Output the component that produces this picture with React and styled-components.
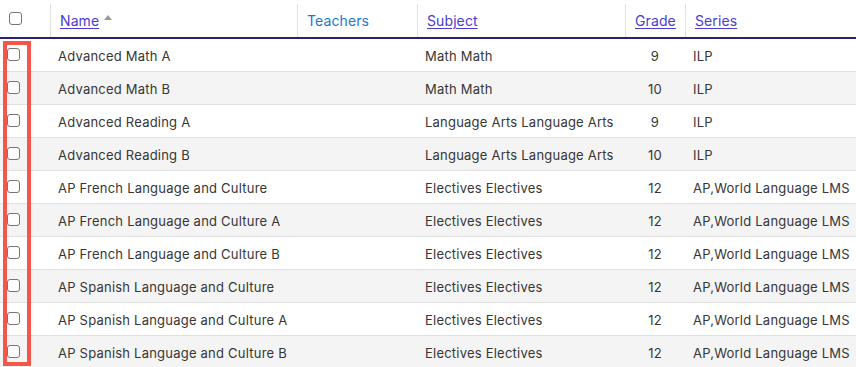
import React from "react";
import styled, { createGlobalStyle } from "styled-components";

const Global = createGlobalStyle`
  html, body { margin: 0; padding: 0; background: #fff; }
  body { font-family: Inter, "Noto Sans", sans-serif; -webkit-font-smoothing: antialiased; }
`;

const COLS = "50px 247px 120px 208px 60px 1fr";

const Table = styled.div`
  position: relative;
  width: 856px;
`;

const HeaderRow = styled.div`
  display: grid;
  grid-template-columns: ${COLS};
  height: 39px;
  padding-top: 4px;
  box-sizing: border-box;
  border-bottom: 2px solid #2c216f;
`;

const HeadCell = styled.div`
  display: flex;
  align-items: center;
  padding-left: 9px;
  border-left: ${(p) => (p.$check ? "none" : "1px solid #e2e2e2")};
  font-size: 14px;
  padding-bottom: 1px;
  letter-spacing: 0.1px;
`;

const HeadLink = styled.a`
  color: ${(p) => (p.$plain ? "#1a78d0" : "#4b3bd3")};
  text-decoration: ${(p) => (p.$plain ? "none" : "underline")};
  text-underline-offset: 2px;
  text-decoration-thickness: 1px;
  cursor: pointer;
`;

const SortArrow = styled.svg`
  margin-left: 5px;
  margin-bottom: 6px;
`;

const Row = styled.div`
  display: grid;
  grid-template-columns: ${COLS};
  height: 33px;
  box-sizing: border-box;
  border-bottom: 1px solid #e0e0e0;
  background: ${(p) => (p.$alt ? "#f4f4f4" : "#fff")};
`;

const Cell = styled.div`
  display: flex;
  align-items: center;
  justify-content: ${(p) => (p.$center ? "center" : "flex-start")};
  padding-left: ${(p) => (p.$center ? "0" : "8px")};
  padding-top: 2px;
  font-size: 13px;
  color: #363636;
  white-space: nowrap;
  overflow: hidden;
  letter-spacing: 0.22px;
`;

const Check = styled.input.attrs({ type: "checkbox" })`
  appearance: none;
  -webkit-appearance: none;
  width: 13px;
  height: 13px;
  margin: 0;
  border: 1px solid #767676;
  border-radius: 3px;
  background: #fff;
  box-sizing: border-box;
  margin-left: ${(p) => (p.$head ? "0" : "-1px")};
  margin-top: -4px;
`;

const Highlight = styled.div`
  position: absolute;
  left: 3px;
  top: 41px;
  width: 28px;
  height: 325px;
  border: 4px solid #f4574a;
  box-sizing: border-box;
  pointer-events: none;
`;

const rows = [
  ["Advanced Math A", "", "Math Math", "9", "ILP"],
  ["Advanced Math B", "", "Math Math", "10", "ILP"],
  ["Advanced Reading A", "", "Language Arts Language Arts", "9", "ILP"],
  ["Advanced Reading B", "", "Language Arts Language Arts", "10", "ILP"],
  ["AP French Language and Culture", "", "Electives Electives", "12", "AP,World Language LMS"],
  ["AP French Language and Culture A", "", "Electives Electives", "12", "AP,World Language LMS"],
  ["AP French Language and Culture B", "", "Electives Electives", "12", "AP,World Language LMS"],
  ["AP Spanish Language and Culture", "", "Electives Electives", "12", "AP,World Language LMS"],
  ["AP Spanish Language and Culture A", "", "Electives Electives", "12", "AP,World Language LMS"],
  ["AP Spanish Language and Culture B", "", "Electives Electives", "12", "AP,World Language LMS"],
];

export default function App() {
  return (
    <>
      <Global />
      <Table>
        <HeaderRow>
          <HeadCell $check>
            <Check $head />
          </HeadCell>
          <HeadCell>
            <HeadLink>Name</HeadLink>
            <SortArrow width="8" height="5" viewBox="0 0 8 5">
              <path d="M0 5 L4 0 L8 5 Z" fill="#9a9a9a" />
            </SortArrow>
          </HeadCell>
          <HeadCell>
            <HeadLink $plain>Teachers</HeadLink>
          </HeadCell>
          <HeadCell>
            <HeadLink>Subject</HeadLink>
          </HeadCell>
          <HeadCell>
            <HeadLink>Grade</HeadLink>
          </HeadCell>
          <HeadCell>
            <HeadLink>Series</HeadLink>
          </HeadCell>
        </HeaderRow>
        {rows.map((r, i) => (
          <Row key={i} $alt={i % 2 === 1}>
            <Cell>
              <Check />
            </Cell>
            <Cell>{r[0]}</Cell>
            <Cell>{r[1]}</Cell>
            <Cell>{r[2]}</Cell>
            <Cell $center>{r[3]}</Cell>
            <Cell>{r[4]}</Cell>
          </Row>
        ))}
        <Highlight />
      </Table>
    </>
  );
}
